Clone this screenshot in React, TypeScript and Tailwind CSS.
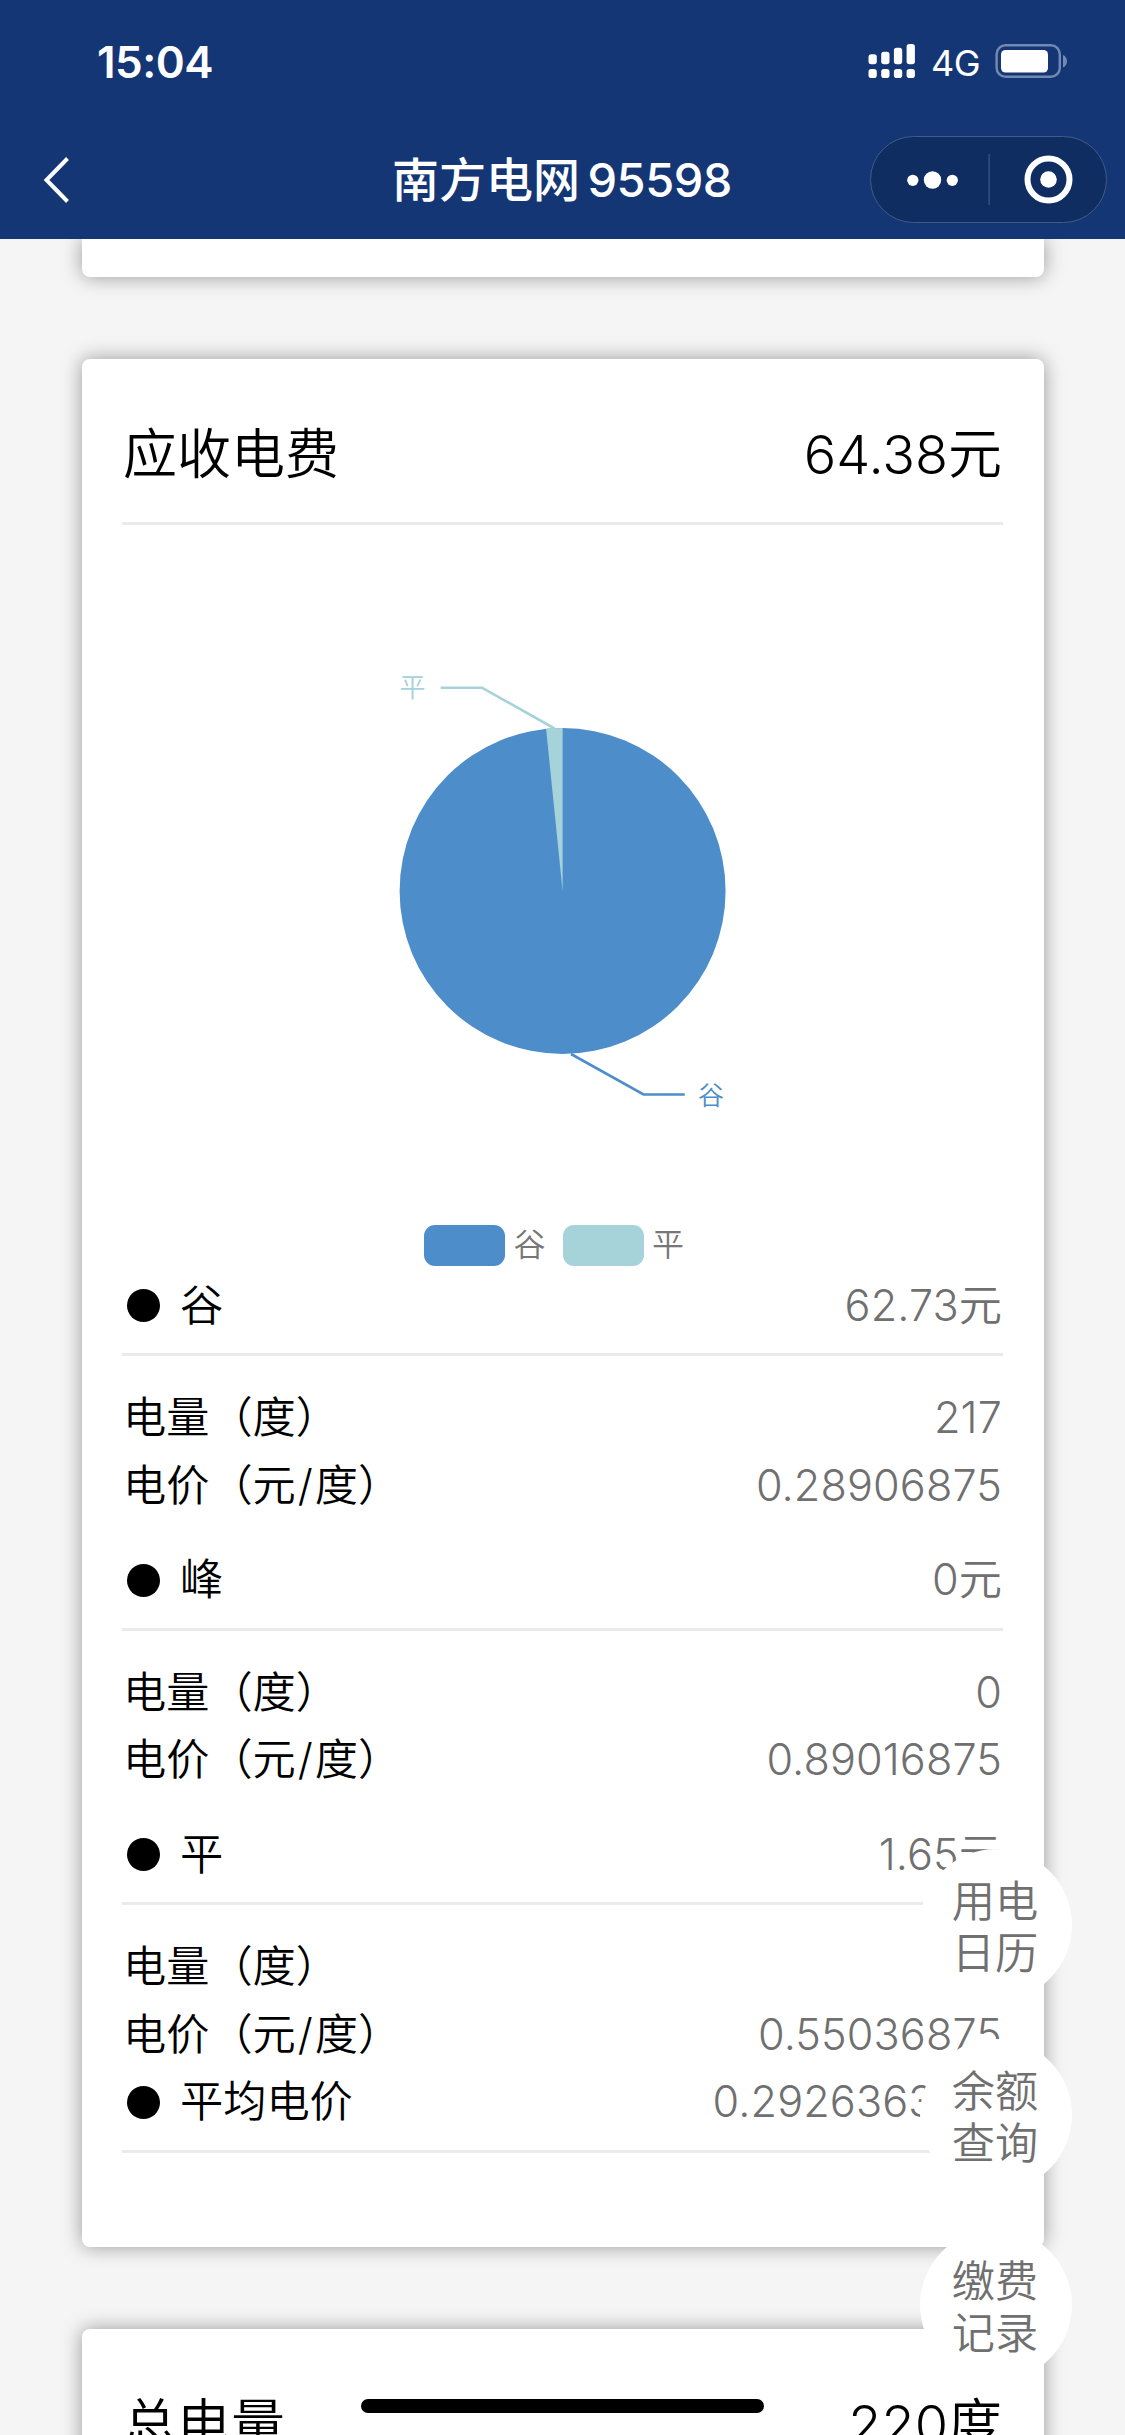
import type { ReactNode } from "react"
import clsx from "clsx"

interface Tariff {
  name: string
  fee: string
  usage: string
  price: string
}

const tariffs: Tariff[] = [
  { name: "谷", fee: "62.73", usage: "217", price: "0.28906875" },
  { name: "峰", fee: "0", usage: "0", price: "0.89016875" },
  { name: "平", fee: "1.65", usage: "", price: "0.55036875" },
]

const shortcuts = [
  ["用电", "日历"],
  ["余额", "查询"],
  ["缴费", "记录"],
]

function StatusBar() {
  const bars = [54.3, 51.7, 47.7, 44]

  return (
    <div className="flex h-[122px] items-center justify-between pr-[57px] pl-[97px]">
      <span className="pt-[2px] text-[44px] leading-none font-semibold tracking-[-0.5px]">15:04</span>
      <div className="flex items-center">
        <svg width="48" height="36" viewBox="868 43 48 36" fill="#fff">
          {bars.map((top, i) => (
            <g key={top}>
              <rect x={868.5 + i * 12.7} y={top} width="8.3" height={64.3 - top} rx="2.8" />
              <rect x={868.5 + i * 12.7} y="69" width="8.3" height="9" rx="2.8" />
            </g>
          ))}
        </svg>
        <span className="ml-[15px] w-[63px] pt-[3px] text-[36px] leading-none tracking-[-0.5px]">4G</span>
        <svg width="74" height="36" viewBox="994 43 74 36">
          <rect x="996.6" y="45.2" width="63.2" height="31.6" rx="9" fill="none" stroke="#728ab2" strokeWidth="2.4" />
          <rect x="1001" y="50" width="47" height="22.6" rx="4.5" fill="#fff" />
          <path d="M1063 55v12.4c2.6-1 4-3.6 4-6.2s-1.4-5.2-4-6.2z" fill="#728ab2" />
        </svg>
      </div>
    </div>
  )
}

function NavBar() {
  return (
    <div className="flex h-[115px] items-center pl-[42px]">
      <svg width="350" height="52" viewBox="42 154 350 52" fill="none" className="shrink-0">
        <path d="M67.5 158.5L46.5 180l21 21.5" stroke="#fff" strokeWidth="4" />
      </svg>
      <h1 className="flex w-[477.5px] gap-[7.5px] text-[47px] leading-none font-medium whitespace-nowrap">
        <span>南方电网</span>
        <span className="tracking-[-0.5px]">95598</span>
      </h1>
      <div className="flex h-[87px] w-[237px] items-center rounded-full border border-[#415b88] bg-[#0f2d61]">
        <svg width="235" height="85" viewBox="870.5 137 235 85" fill="#fff">
          <circle cx="912.3" cy="180.3" r="5.6" />
          <circle cx="932" cy="180" r="8.7" />
          <circle cx="951.8" cy="180.3" r="5.6" />
          <rect x="988" y="154" width="1.2" height="51" fill="#415b88" />
          <circle cx="1048" cy="179.5" r="21" fill="none" stroke="#fff" strokeWidth="6" />
          <circle cx="1048" cy="179.5" r="8.3" />
        </svg>
      </div>
    </div>
  )
}

function Card({ className, children }: { className?: string; children?: ReactNode }) {
  return (
    <section className={clsx("rounded-[8px] bg-white px-[40.5px] shadow-[0_0_20px_rgba(0,0,0,0.38)]", className)}>
      {children}
    </section>
  )
}

function CardTitle({ label, value, unit }: { label: string; value: string; unit: string }) {
  return (
    <div className="flex h-[166px] items-center justify-between border-b-[3px] border-[#eaeaea] pt-[29px] pr-px pl-px text-[54px] leading-none text-black">
      <span>{label}</span>
      <span className="flex items-baseline">
        <span>{value}</span>
        {unit}
      </span>
    </div>
  )
}

function PieChart() {
  return (
    <svg width="880" height="699" viewBox="122 525 880 699" className="block">
      <circle cx="562.6" cy="891" r="163" fill="#4d8eca" />
      <path d="M562.6 891L546.1 728.8A163 163 0 0 1 562.6 728z" fill="#a6d2da" />
      <path d="M440.7 687.7H482L554.5 728.5" fill="none" stroke="#a6d2da" strokeWidth="2.6" />
      <path d="M571 1054L643.5 1094.5H684.7" fill="none" stroke="#4d8eca" strokeWidth="2.6" />
      <text x="412.5" y="697" textAnchor="middle" fontSize="26" fill="#a6d2da">平</text>
      <text x="711" y="1105" textAnchor="middle" fontSize="26" fill="#4d8eca">谷</text>
    </svg>
  )
}

function Legend() {
  return (
    <div className="flex h-[42px] items-center justify-center pr-[17px] text-[32px] leading-none text-[#777]">
      <i className="h-[41px] w-[81px] rounded-[11px] bg-[#4d8eca]" />
      <span className="mr-[17px] ml-[8.5px]">谷</span>
      <i className="h-[41px] w-[81px] rounded-[11px] bg-[#a6d2da]" />
      <span className="ml-[8.5px]">平</span>
    </div>
  )
}

interface RowProps {
  label: ReactNode
  value: ReactNode
  unit?: string
}

function Row({ label, value, unit }: RowProps) {
  return (
    <div className="flex h-[67.5px] items-center justify-between pt-px pr-px">
      <span>{label}</span>
      <span className="flex items-baseline text-[#707070]">
        <span className="tracking-[0.1px]">{value}</span>
        {unit}
      </span>
    </div>
  )
}

function HeadRow({ label, value, unit }: RowProps) {
  return (
    <div className="flex items-start border-b-[3px] border-[#eaeaea] pb-[14.5px] pl-[5px]">
      <i className="mt-[18px] mr-[20px] size-[33px] rounded-full bg-black" />
      <div className="flex-1">
        <Row label={label} value={value} unit={unit} />
      </div>
    </div>
  )
}

export default function App() {
  return (
    <div className="relative flex h-[2435px] w-[1125px] flex-col overflow-hidden bg-[#f5f5f5] font-[Inter,'Noto_Sans_CJK_SC',sans-serif]">
      <header className="h-[239px] shrink-0 bg-[#143674] text-white">
        <StatusBar />
        <NavBar />
      </header>

      <main className="flex-1 overflow-hidden px-[81.5px] text-[43.2px] leading-none font-[350] text-black">
        <Card className="h-[38px] rounded-t-none" />

        <Card className="mt-[82px] h-[1888px]">
          <CardTitle label="应收电费" value="64.38" unit="元" />
          <PieChart />
          <Legend />
          <div className="pt-[5.2px]">
            {tariffs.map((t) => (
              <div key={t.name} className="mb-[27px] last:mb-0">
                <HeadRow label={t.name} value={t.fee} unit="元" />
                <div className="pt-[27.5px] pl-px">
                  <Row label="电量（度）" value={t.usage} />
                  <Row
                    label={
                      <>
                        电价（元<span className="mx-[2px]">/</span>度）
                      </>
                    }
                    value={t.price}
                  />
                </div>
              </div>
            ))}
          </div>
          <HeadRow label="平均电价" value={<span className="-mr-[11px]">0.2926363636</span>} />
        </Card>

        <Card className="mt-[82px] h-[400px]">
          <CardTitle label="总电量" value="220" unit="度" />
        </Card>
      </main>

      {/* Floating shortcuts */}
      <div className="absolute top-[1849px] left-[920px] flex flex-col gap-[38px]">
        {shortcuts.map(([first, second]) => (
          <button
            key={first}
            className="flex size-[152px] flex-col items-center justify-center rounded-full bg-white pt-[4px] pr-[2px] text-[43.2px] leading-[52px] font-[350] text-[#707070]"
          >
            <span>{first}</span>
            <span>{second}</span>
          </button>
        ))}
      </div>

      {/* Home indicator */}
      <div className="absolute top-[2399px] left-[361px] h-[14px] w-[403px] rounded-full bg-black" />
    </div>
  )
}
